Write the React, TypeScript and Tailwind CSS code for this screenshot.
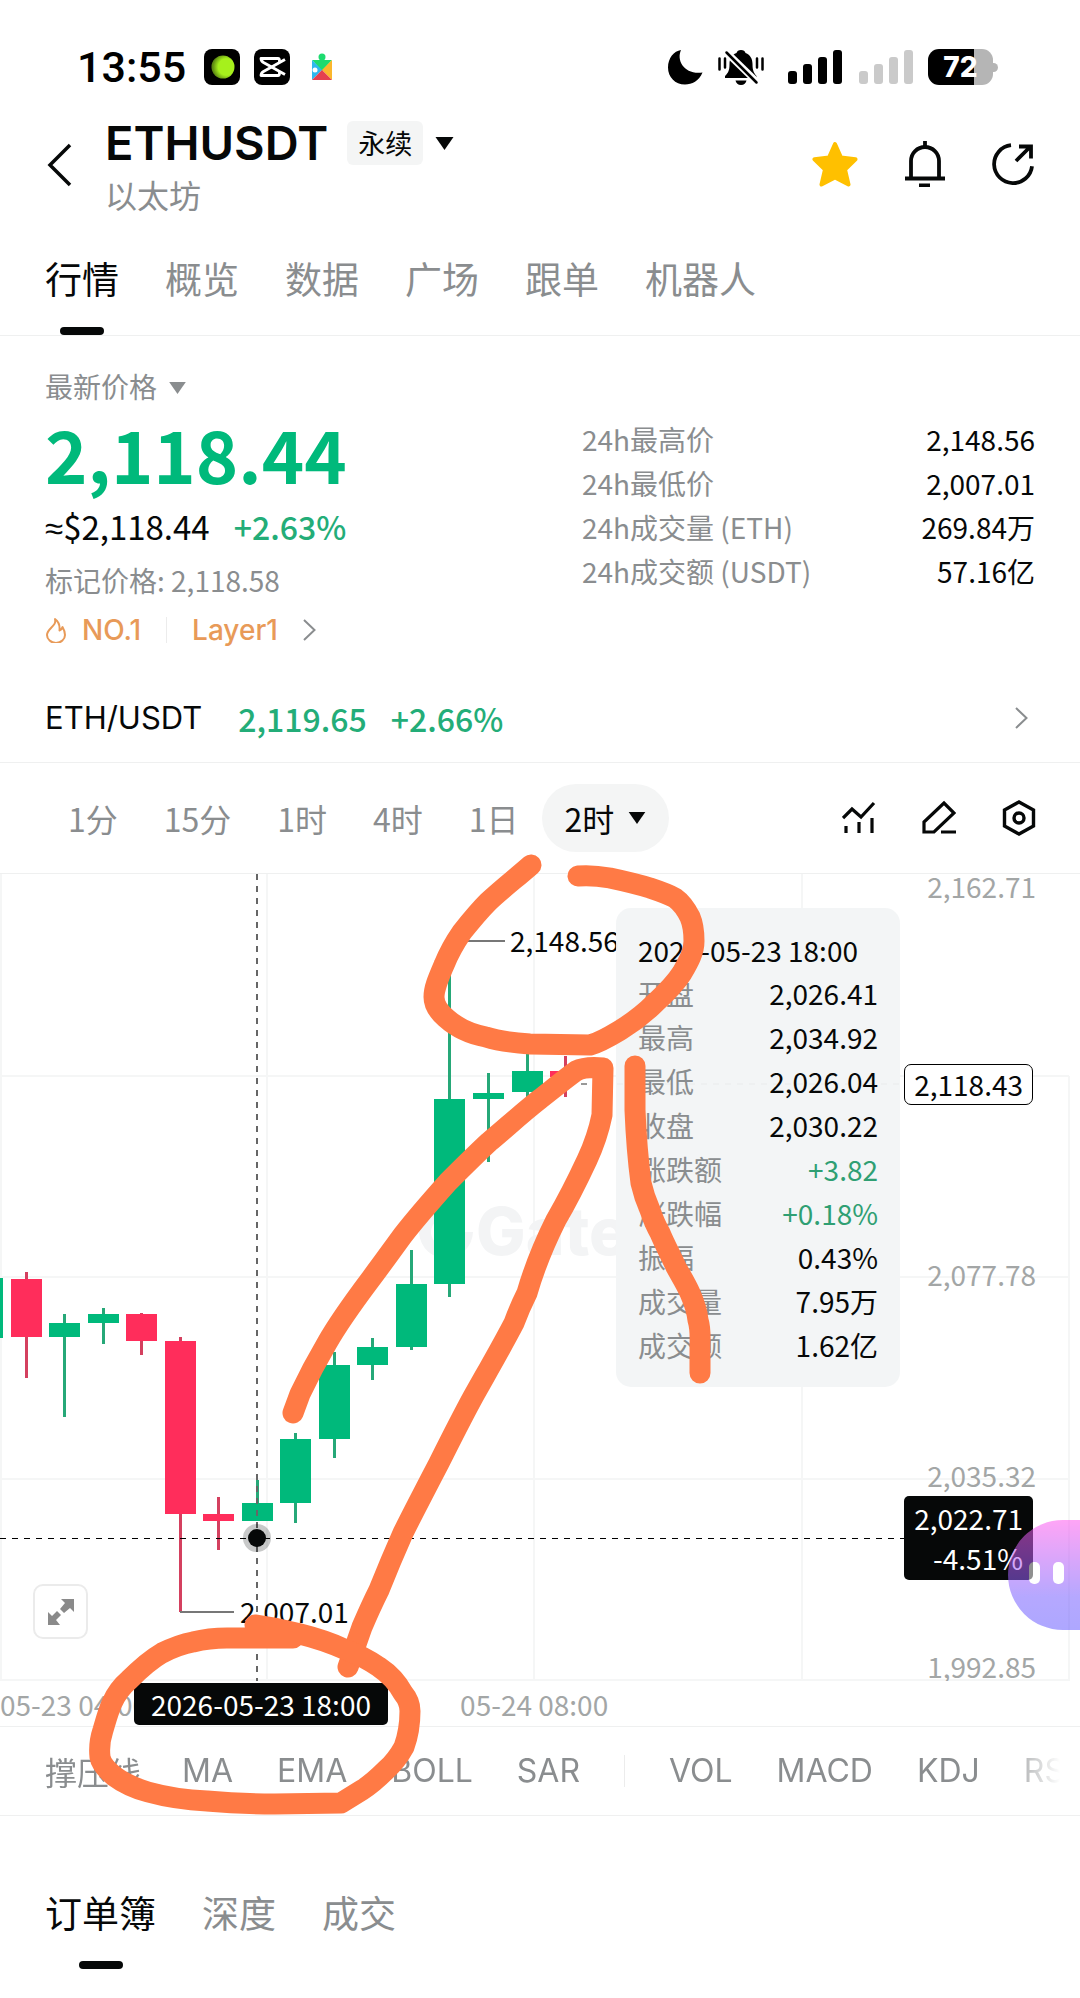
import { clsx } from 'clsx';

const tabs = ['行情', '概览', '数据', '广场', '跟单', '机器人'];

const stats = [
  { label: '24h最高价', value: '2,148.56' },
  { label: '24h最低价', value: '2,007.01' },
  { label: '24h成交量 (ETH)', value: '269.84万' },
  { label: '24h成交额 (USDT)', value: '57.16亿' },
];

const intervals = ['1分', '15分', '1时', '4时', '1日'];

const mainIndicators = ['MA', 'EMA', 'BOLL', 'SAR'];
const subIndicators = ['VOL', 'MACD', 'KDJ', 'RSI'];

const bookTabs = ['订单簿', '深度', '成交'];

const ohlc = [
  { label: '开盘', value: '2,026.41' },
  { label: '最高', value: '2,034.92' },
  { label: '最低', value: '2,026.04' },
  { label: '收盘', value: '2,030.22' },
  { label: '涨跌额', value: '+3.82', up: true },
  { label: '涨跌幅', value: '+0.18%', up: true },
  { label: '振幅', value: '0.43%' },
  { label: '成交量', value: '7.95万' },
  { label: '成交额', value: '1.62亿' },
];

// y values are measured from the top of the chart
const candles = [
  { x: -13, high: 404, top: 404, bottom: 464, low: 464, up: true },
  { x: 26, high: 398, top: 405, bottom: 463, low: 504, up: false },
  { x: 64, high: 440, top: 449, bottom: 463, low: 543, up: true },
  { x: 103, high: 434, top: 440, bottom: 449, low: 470, up: true },
  { x: 141, high: 439, top: 440, bottom: 467, low: 481, up: false },
  { x: 180, high: 463, top: 467, bottom: 640, low: 738, up: false },
  { x: 218, high: 623, top: 640, bottom: 647, low: 676, up: false },
  { x: 257, high: 606, top: 629, bottom: 647, low: 647, up: true },
  { x: 295, high: 559, top: 565, bottom: 629, low: 649, up: true },
  { x: 334, high: 478, top: 491, bottom: 565, low: 584, up: true },
  { x: 372, high: 464, top: 473, bottom: 491, low: 506, up: true },
  { x: 411, high: 376, top: 410, bottom: 473, low: 476, up: true },
  { x: 449, high: 67, top: 225, bottom: 410, low: 423, up: true },
  { x: 488, high: 199, top: 219, bottom: 225, low: 288, up: true },
  { x: 527, high: 179, top: 197, bottom: 218, low: 223, up: true },
  { x: 565, high: 182, top: 197, bottom: 203, low: 223, up: false },
];

function Caret({ className }: { className?: string }) {
  return (
    <svg viewBox="0 0 18 13" className={clsx('fill-current', className)} aria-hidden="true">
      <path d="M0 0h18L9 13z" />
    </svg>
  );
}

function ChevronRight({ className }: { className?: string }) {
  return (
    <svg viewBox="0 0 14 24" className={className} fill="none" stroke="currentColor" strokeWidth="2" aria-hidden="true">
      <path d="M1 2l10.500 10L1 22" />
    </svg>
  );
}

function Signal({ className }: { className?: string }) {
  return (
    <svg viewBox="0 0 54 34" className={clsx('h-[34px] w-[54px] fill-current', className)} aria-hidden="true">
      <rect x="0" y="21" width="9" height="13" rx="3" />
      <rect x="15" y="14" width="9" height="20" rx="3" />
      <rect x="30" y="7" width="9" height="27" rx="3" />
      <rect x="45" y="0" width="9" height="34" rx="3" />
    </svg>
  );
}

function StatusBar() {
  return (
    <div className="flex h-[36px] items-center justify-between pr-[82px] pl-[77px]">
      <div className="flex items-center">
        <span className="font-[Roboto,sans-serif] text-[43px] leading-[36px] font-medium text-black">13:55</span>
        <svg viewBox="0 0 36 36" className="ml-[18px] size-[36px]" aria-hidden="true">
          <defs>
            <radialGradient id="ball" cx="0.65" cy="0.5" r="0.6">
              <stop offset="0.6" stopColor="#a6f01c" />
              <stop offset="1" stopColor="#5d8a12" />
            </radialGradient>
          </defs>
          <rect width="36" height="36" rx="8" fill="#000" />
          <circle cx="19" cy="18" r="11.500" fill="url(#ball)" />
        </svg>
        <svg viewBox="0 0 36 36" className="ml-[14px] size-[36px]" aria-hidden="true">
          <rect width="36" height="36" rx="8" fill="#000" />
          <g fill="none" stroke="#fff" strokeWidth="2.800" strokeLinejoin="round">
            <path d="M31 10.500L9.500 22.500Q7 24 7 26.500H24Q25.500 26.500 25.500 24L25.500 22.500" />
            <path d="M31 25.500L9.500 13.500Q7 12 7 9.500H24Q25.500 9.500 25.500 12L25.500 13.500" />
          </g>
        </svg>
        <svg viewBox="0 0 22 28" className="ml-[21px] h-[28px] w-[22px]" aria-hidden="true">
          <path d="M1 7h20L11 18z" fill="#1ddb6f" />
          <circle cx="11" cy="4" r="3.500" fill="#1ddb6f" />
          <path d="M9 4h4v5H9z" fill="#1ddb6f" />
          <path d="M1 7l10 10L1 27z" fill="#2fb8ee" />
          <circle cx="4" cy="17" r="2.500" fill="#fff" />
          <path d="M21 7v20L11 17z" fill="#fbb72c" />
          <path d="M1 27l10-10 10 10z" fill="#e5404f" />
        </svg>
      </div>
      <div className="flex items-center">
        <svg viewBox="0 0 35 36" className="h-[36px] w-[35px]" aria-hidden="true">
          <path d="M13 1C8 12 17 26 34.500 23.500C31 32 24 35.500 17 35.500C7 35.500 0 28 0 18.500C0 9 6 2 13 1z" fill="#000" />
        </svg>
        <svg viewBox="0 0 46 36" className="ml-[15px] h-[36px] w-[46px]" aria-hidden="true">
          <path d="M23 1c2.500 0 4 1.200 4.500 3c5 2 7 6 7 11c0 7 1.500 9 4 12v2H7v-2c3-3 4.500-5 4.500-12c0-5 2-9 7-11c.5-1.800 2-3 4.500-3z" />
          <path d="M17.500 31.500h11c-.5 2.500-2.500 4.500-5.500 4.500s-5-2-5.500-4.500z" />
          <path d="M6 1l35 34" stroke="#fff" strokeWidth="7" />
          <path d="M8.500 3.500l30 30" stroke="#000" strokeWidth="2.500" strokeLinecap="round" />
          <path d="M1.500 9.500v11M7 9.500v9M39 9.500v9M44.500 9.500v11" stroke="#000" strokeWidth="2.500" strokeLinecap="round" />
        </svg>
        <Signal className="ml-[24px] text-black" />
        <Signal className="ml-[17px] text-[#cacaca]" />
        <div className="ml-[15px] flex h-[36px] w-[65px] items-center justify-center overflow-hidden rounded-[11px] bg-[linear-gradient(90deg,#000_46px,#b5b5b5_46px)]">
          <span className="font-[Inter,sans-serif] text-[28px] leading-[36px] font-extrabold text-white">72</span>
        </div>
        <span className="h-[9px] w-[5px] rounded-r-full bg-[#b5b5b5]" />
      </div>
    </div>
  );
}

function Header() {
  return (
    <header className="flex items-start justify-between pt-[32px] pr-[46px] pl-[46px]">
      <div className="flex">
        <button type="button" aria-label="返回" className="mt-[26px] h-[44px] w-[26px]">
          <svg viewBox="0 0 26 44" fill="none" stroke="currentColor" strokeWidth="3.500">
            <path d="M24 2L4 22l20 20" />
          </svg>
        </button>
        <div className="ml-[33px]">
          <div className="flex h-[52px] items-center">
            <h1 className="font-[Inter,sans-serif] text-[47px] leading-[52px] font-semibold">ETHUSDT</h1>
            <span className="ml-[19px] rounded-[6px] bg-[#f4f5f5] px-[11px] text-[27px] leading-[44px]">永续</span>
            <button type="button" aria-label="切换合约" className="ml-[12px]">
              <Caret className="h-[13px] w-[19px]" />
            </button>
          </div>
          <p className="text-[32px] leading-[50px] text-[#8a8d8f]">以太坊</p>
        </div>
      </div>
      <div className="flex items-center gap-[47px] pt-[24px]">
        <button type="button" aria-label="收藏">
          <svg viewBox="0 0 46 46" className="size-[46px]">
            <path
              d="M23 3l6 13.500 14.500 1.700-10.500 10.300 3.500 15L23 36.500 9.500 43.500l3.500-15L2.500 18.200 17 16.500z"
              fill="#ffc000"
              stroke="#ffc000"
              strokeWidth="4"
              strokeLinejoin="round"
            />
          </svg>
        </button>
        <button type="button" aria-label="提醒">
          <svg viewBox="0 0 40 46" className="h-[46px] w-[40px]" fill="none" stroke="currentColor" strokeWidth="3.800">
            <path d="M6 37V20a14 14 0 0 1 28 0v17M0 37.500h40M14 44.500h11M20 0v6" />
          </svg>
        </button>
        <button type="button" aria-label="分享">
          <svg viewBox="0 0 42 42" className="size-[42px]" fill="none" stroke="currentColor" strokeWidth="3.800">
            <path d="M19 2.200a19 19 0 1 0 21 21" />
            <path d="M24 18L38 4M27 3.500h12v12" />
          </svg>
        </button>
      </div>
    </header>
  );
}

function Tabs({ items }: { items: string[] }) {
  return (
    <nav className="flex gap-[46px] px-[45px] text-[37px] leading-[44px]">
      {items.map((tab, i) => (
        <button key={tab} type="button" className={clsx('flex flex-col items-center', i > 0 && 'text-[#8a8d8f]')}>
          {tab}
          {i === 0 && <span className="mt-[27px] h-[8px] w-[44px] rounded-full bg-[#060808]" />}
        </button>
      ))}
    </nav>
  );
}

function PriceSummary() {
  return (
    <section className="flex justify-between px-[45px] pt-[30px]">
      <div>
        <button type="button" className="flex items-center gap-[12px] text-[28px] leading-[40px] text-[#8a8d8f]">
          最新价格
          <Caret className="mt-[4px] h-[12px] w-[17px]" />
        </button>
        <p className="text-[72px] leading-[93px] font-bold text-[#00b97b]">2,118.44</p>
        <p className="flex gap-[24px] text-[33px] leading-[54px]">
          <span>
            <span className="font-['Liberation_Sans',sans-serif]">≈</span>$2,118.44
          </span>
          <span className="text-[32px] font-medium text-[#23ad78]">+2.63%</span>
        </p>
        <p className="text-[28px] leading-[48px] text-[#8a8d8f]">标记价格: 2,118.58</p>
        <div className="flex items-center font-[Inter,sans-serif] text-[28px] leading-[52px] font-medium text-[#e89a58]">
          <svg viewBox="0 0 22 26" className="mr-[15px] h-[26px] w-[22px]" fill="none" stroke="currentColor" strokeWidth="2" strokeLinejoin="round">
            <path d="M10 2c1 4-1 6-4 9c-2.500 2.500-4 4.500-4 7a8.500 7.500 0 0 0 18 0c0-3-1-5.500-2.500-8c-.5 2-1.500 3-3 3.500C15 9 13.500 4.500 10 2z" />
          </svg>
          NO.1
          <span className="mx-[25px] h-[26px] w-px bg-[#ececec]" />
          <a href="#layer1" className="flex items-center gap-[25px]">
            Layer1
            <ChevronRight className="h-[24px] w-[14px] text-[#8a8d8f]" />
          </a>
        </div>
      </div>
      <dl className="w-[453px] pt-[51px] text-[28px] leading-[44px]">
        {stats.map((row) => (
          <div key={row.label} className="flex justify-between">
            <dt className="text-[#8a8d8f]">{row.label}</dt>
            <dd>{row.value}</dd>
          </div>
        ))}
      </dl>
    </section>
  );
}

function SpotRow() {
  return (
    <a href="#spot" className="flex items-center border-b border-[#eff0f0] px-[45px] pt-[40px] pb-[22px] text-[32px] leading-[44px]">
      <span className="font-[Inter,sans-serif] text-[31px]">ETH/USDT</span>
      <span className="ml-[36px] font-medium text-[#23ad78]">2,119.65</span>
      <span className="ml-[24px] font-medium text-[#23ad78]">+2.66%</span>
      <ChevronRight className="mr-[6px] ml-auto h-[24px] w-[14px] text-[#8a8d8f]" />
    </a>
  );
}

function IntervalBar() {
  return (
    <div className="flex items-center justify-between border-b border-[#eff0f0] py-[21px] pr-[44px] pl-[45px] text-[32px]">
      <div className="flex items-center leading-[68px] text-[#8a8d8f]">
        {intervals.map((item) => (
          <button key={item} type="button" className="px-[23px]">
            {item}
          </button>
        ))}
        <button type="button" className="flex h-[68px] items-center gap-[14px] rounded-full bg-[#f4f5f5] px-[23px] text-[#060808]">
          2时
          <Caret className="h-[12px] w-[18px]" />
        </button>
      </div>
      <div className="flex items-center gap-[46px]">
        <button type="button" aria-label="指标">
          <svg viewBox="0 0 34 36" className="h-[36px] w-[34px]" fill="none" stroke="currentColor" strokeWidth="3.200">
            <path d="M1 18l9-9 9 8L32 3M4 26v7M17 22v11M30 18v15" />
          </svg>
        </button>
        <button type="button" aria-label="画线">
          <svg viewBox="0 0 34 36" className="h-[36px] w-[34px]" fill="none" stroke="currentColor" strokeWidth="3.200">
            <path d="M2 32V22L22 3l10 10-20 19zM19 32h15" />
          </svg>
        </button>
        <button type="button" aria-label="设置">
          <svg viewBox="0 0 34 36" className="h-[36px] w-[34px]" fill="none" stroke="currentColor" strokeWidth="3.400">
            <path d="M17 2l14.500 8v16L17 34 2.500 26V10z" />
            <circle cx="17" cy="18" r="5" />
          </svg>
        </button>
      </div>
    </div>
  );
}

function Candles() {
  return (
    <svg className="absolute inset-0 h-full w-full" aria-hidden="true">
      <g stroke="#f5f6f6" strokeWidth="2">
        <path d="M1 0v807M267 0v807M534 0v807M802 0v807M1069 202v605" />
        <path d="M0 202h1069M0 403h1069M0 605h1069M0 806h1069" />
      </g>
      <g fill="#f3f4f5">
        <path d="M452 331a27 27 0 1 0 21 27h-14a14 14 0 1 1-7-12z" />
        <text x="476" y="381" fontSize="66" fontWeight="800" fontFamily="Inter, sans-serif">
          Gate
        </text>
      </g>
      {candles.map((c) => (
        <g key={c.x} fill={c.up ? '#00b97b' : '#ff2d5b'}>
          <rect x={c.x - 1} y={c.high} width="3" height={c.low - c.high} fill={c.up ? '#26a878' : '#d4405f'} />
          <rect x={c.x - 15} y={c.top} width="31" height={c.bottom - c.top} />
        </g>
      ))}
      <path d="M450 67h55M180 738h54" stroke="#777" strokeWidth="2" />
      <path d="M581 210h324" stroke="#333" strokeWidth="1" strokeDasharray="6 6" />
      <path d="M257 0v807" stroke="#666" strokeWidth="2" strokeDasharray="6 6" />
      <path d="M0 664h905" stroke="#000" strokeWidth="1" strokeDasharray="6 6" shapeRendering="crispEdges" />
      <circle cx="257" cy="664" r="14" fill="#060808" fillOpacity="0.22" />
      <circle cx="257" cy="664" r="9" fill="#060808" />
    </svg>
  );
}

function Tooltip() {
  return (
    <div className="absolute top-[34px] left-[616px] w-[284px] rounded-[15px] bg-[#f2f4f5]/95 px-[22px] pt-[21px] pb-[20px] leading-[44px]">
      <p className="leading-[42px]">2026-05-23 18:00</p>
      <dl>
        {ohlc.map((row) => (
          <div key={row.label} className="flex justify-between">
            <dt className="text-[#8a8d8f]">{row.label}</dt>
            <dd className={row.up ? 'text-[#2f9f73]' : ''}>{row.value}</dd>
          </div>
        ))}
      </dl>
    </div>
  );
}

function Chart() {
  return (
    <section className="relative h-[807px] overflow-hidden text-[28px] leading-[40px]">
      <Candles />
      <span className="absolute top-[46px] left-[510px]">2,148.56</span>
      <span className="absolute top-[717px] left-[240px]">2,007.01</span>

      <div className="text-[#a3a6a6]">
        <span className="absolute top-[-8px] right-[44px]">2,162.71</span>
        <span className="absolute top-[380px] right-[44px]">2,077.78</span>
        <span className="absolute top-[581px] right-[44px]">2,035.32</span>
        <span className="absolute top-[772px] right-[44px]">1,992.85</span>
      </div>

      <Tooltip />

      <span className="absolute top-[190px] right-[47px] rounded-[7px] border border-black bg-white px-[9px] leading-[39px]">
        2,118.43
      </span>
      <div className="absolute top-[622px] right-[47px] flex flex-col items-end rounded-[5px] bg-[#060808] px-[10px] py-[2px] leading-[40px] text-white">
        <span>2,022.71</span>
        <span>-4.51%</span>
      </div>

      <button
        type="button"
        aria-label="全屏"
        className="absolute top-[710px] left-[33px] flex size-[55px] items-center justify-center rounded-[10px] border-2 border-[#ebebeb] bg-white"
      >
        <svg viewBox="0 0 26 26" className="size-[26px]" fill="#8a8a8a">
          <path d="M13 0h13v13l-4-4-6 5-4-4 5-6zM0 13l4 4 5-5 4 4-5 5 4 5H0z" />
        </svg>
      </button>

      <button type="button" aria-label="智能助手" className="absolute top-[646px] right-0 opacity-55">
        <svg viewBox="0 0 72 110" className="h-[110px] w-[72px]">
          <defs>
            <linearGradient id="bot" x1="0" y1="0" x2="0" y2="1">
              <stop offset="0" stopColor="#ff5cf0" />
              <stop offset="0.7" stopColor="#7a62ff" />
              <stop offset="1" stopColor="#6c61ff" />
            </linearGradient>
          </defs>
          <path d="M72 0H55a55 55 0 0 0 0 110h17z" fill="url(#bot)" />
          <rect x="21" y="42" width="11" height="22" rx="5" fill="#fff" />
          <rect x="45" y="42" width="11" height="22" rx="5" fill="#fff" />
        </svg>
      </button>
    </section>
  );
}

function TimeAxis() {
  return (
    <div className="relative flex h-[46px] items-center border-b border-[#eff0f0] text-[28px] leading-[40px] text-[#a3a6a6]">
      <span>05-23 04:00</span>
      <span className="ml-[312px]">05-24 08:00</span>
      <span className="absolute top-[2px] left-[134px] rounded-[5px] bg-[#060808] px-[17px] leading-[42px] text-white">
        2026-05-23 18:00
      </span>
    </div>
  );
}

function IndicatorBar() {
  return (
    <div className="border-b border-[#eff0f0]">
      <div className="flex items-center gap-[41px] overflow-hidden py-[22px] pl-[45px] text-[32px] leading-[44px] whitespace-nowrap text-[#8a8d8f] [mask-image:linear-gradient(90deg,#000_calc(100%-80px),transparent_calc(100%-20px))]">
        <button type="button">撑压线</button>
        <div className="flex items-center gap-[44px] font-[Inter,sans-serif]">
          {mainIndicators.map((name) => (
            <button key={name} type="button">
              {name}
            </button>
          ))}
          <span className="h-[32px] w-px shrink-0 bg-[#ececec]" />
          {subIndicators.map((name) => (
            <button key={name} type="button">
              {name}
            </button>
          ))}
        </div>
      </div>
    </div>
  );
}

// freehand marker strokes laid over the page
function MarkerStrokes() {
  return (
    <svg
      className="pointer-events-none absolute inset-0 h-full w-full"
      fill="none"
      stroke="#ff7a45"
      strokeWidth="21"
      strokeLinecap="round"
      strokeLinejoin="round"
      aria-hidden="true"
    >
      <path d="M531 865C515 879 503 888 488 902C478 912 470 922 462 932C453 945 448 955 444 965C438 979 434 988 434 997C434 1004 439 1012 446 1018C457 1028 470 1034 486 1037C502 1042 515 1043 530 1044L590 1045C601 1042 612 1035 622 1029C635 1021 645 1013 655 1003C667 992 675 984 682 973C689 961 694 952 694 941C694 932 693 924 690 917C686 909 682 903 675 898C668 894 659 891 650 888C637 884 624 881 610 878C599 876 589 875 578 876" />
      <path d="M293 1413L300 1394C308 1377 317 1360 327 1343C340 1320 355 1300 370 1280C382 1264 392 1250 403 1235C417 1217 432 1200 448 1182C462 1168 475 1155 489 1142C507 1127 522 1113 540 1099C554 1088 565 1079 576 1071C584 1067 593 1067 603 1068L602 1115C599 1130 594 1145 587 1160C580 1175 570 1196 556 1220C545 1242 536 1262 527 1293C522 1303 518 1312 514 1323C501 1348 487 1372 473 1397C461 1419 450 1441 439 1463C427 1486 415 1509 403 1533C395 1551 387 1570 379 1590C373 1602 368 1613 362 1627L348 1667" />
      <path d="M635 1066L635 1110C636 1135 638 1160 641 1183C643 1192 646 1201 650 1210C653 1219 656 1226 660 1233C665 1245 671 1256 676 1267C681 1276 686 1284 690 1293C694 1302 697 1311 698 1320C701 1330 700 1339 700 1347V1373" />
      <path d="M255 1625C270 1627 285 1630 300 1634C316 1638 331 1643 344 1649C357 1654 369 1660 379 1667C388 1673 397 1682 403 1693C408 1699 410 1704 410 1711C410 1724 408 1736 404 1747C399 1756 394 1763 386 1770C378 1778 370 1785 362 1790L341 1803L275 1804C250 1804 228 1803 207 1801C186 1800 166 1797 148 1792C134 1788 122 1782 114 1776C107 1770 101 1764 100 1757C99 1748 100 1739 103 1730C106 1720 108 1712 112 1703C116 1694 122 1686 129 1680C140 1669 150 1660 162 1653C172 1648 182 1644 193 1642C205 1639 216 1638 227 1638H293" />
    </svg>
  );
}

export default function App() {
  return (
    <main className="relative overflow-hidden bg-white pt-[49px] pb-[28px] font-['Noto_Sans_CJK_SC',sans-serif] text-[#060808]">
      <StatusBar />
      <Header />
      <div className="border-b border-[#eff0f0] pt-[37px]">
        <Tabs items={tabs} />
      </div>
      <PriceSummary />
      <SpotRow />
      <IntervalBar />
      <Chart />
      <TimeAxis />
      <IndicatorBar />
      <div className="pt-[74px]">
        <Tabs items={bookTabs} />
      </div>
      <MarkerStrokes />
    </main>
  );
}
